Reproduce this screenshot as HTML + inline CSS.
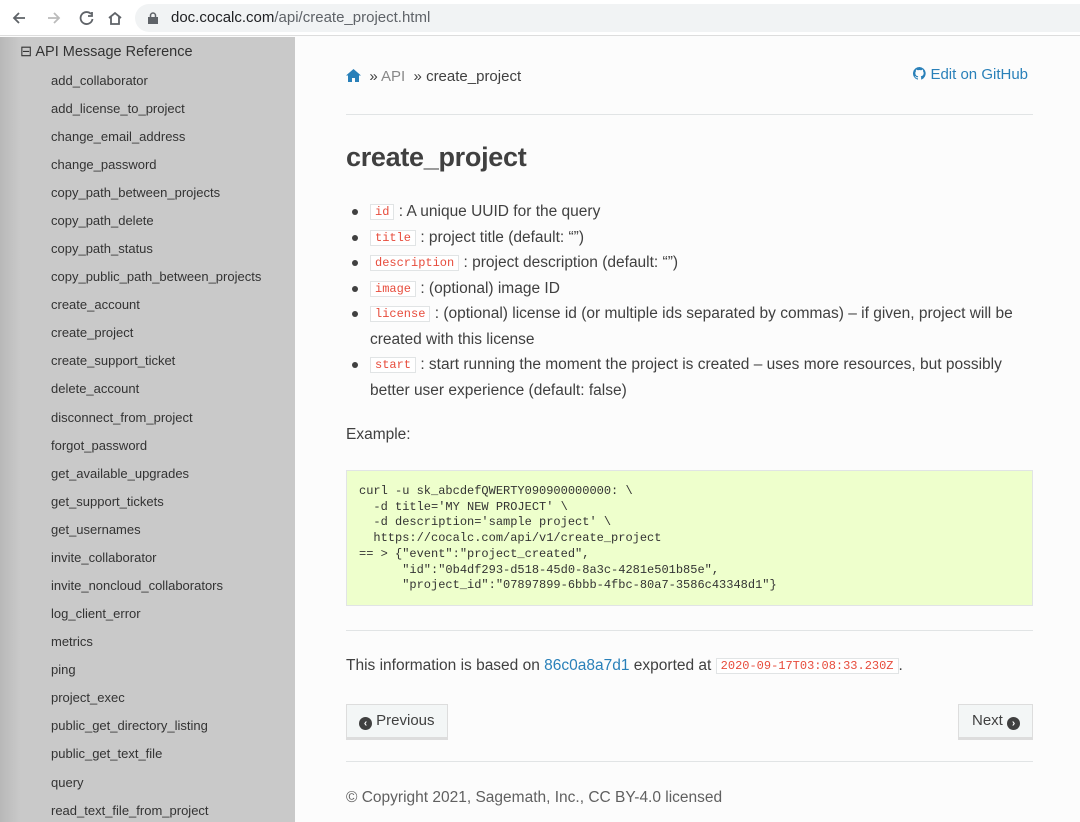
<!DOCTYPE html>
<html><head><meta charset="utf-8"><style>
*{margin:0;padding:0;box-sizing:border-box}
body{width:1080px;height:822px;overflow:hidden;background:#fcfcfc;font-family:"Liberation Sans",sans-serif;color:#404040;position:relative}
.top{position:absolute;left:0;top:0;width:1080px;height:36px;background:#fff;border-bottom:1px solid #ddd}
.url{position:absolute;left:135px;top:4px;width:960px;height:28px;border-radius:14px;background:#f1f3f4;font-size:15px;line-height:28px;padding-left:36px;color:#202124}
.url span{color:#5f6368}
.side{position:absolute;left:0;top:37px;width:295px;height:785px;background:linear-gradient(90deg,#b8b8b8 0,#c9c9c9 20px,#c9c9c9 100%)}
.side .h{position:absolute;left:20px;top:7px;font-size:14.5px;color:#333}
.side a{position:absolute;left:51px;font-size:13px;color:#333;text-decoration:none}
.main{position:absolute;left:346px;top:37px;width:687px}
.bc{position:absolute;top:31px;font-size:15px}
.gh{position:absolute;right:5px;top:29px;color:#2980b9;font-size:15px}
hr{border:0;border-top:1px solid #e1e4e5;position:absolute;left:0;width:687px}
h1{position:absolute;top:105px;font-size:27px;font-weight:bold;color:#404040;letter-spacing:-0.3px}
ul{position:absolute;top:162px;left:4px;list-style:none;font-size:15.5px;line-height:25.5px;width:680px}
ul li{position:relative;padding-left:20px}
ul li:before{content:"";position:absolute;left:2px;top:10px;width:6px;height:6px;border-radius:3px;background:#404040}
code{font-family:"Liberation Mono",monospace;font-size:12px;line-height:12px;color:#e74c3c;background:#fff;border:1px solid #e1e4e5;padding:1px 4px;display:inline-block;vertical-align:1px}
pre{position:absolute;top:433px;width:687px;height:136px;background:#eeffcc;border:1px solid #e1e4e5;font-family:"Liberation Mono",monospace;font-size:12px;line-height:15.7px;padding:13px 12px;color:#333}
.btn{position:absolute;top:667px;height:34px;background:#f3f6f6;border:1px solid #ddd;box-shadow:0 2px 0 #ddd;font-size:15px;line-height:32px;padding:0 12px;color:#404040}
.ic{display:inline-block;width:13px;height:13px;border-radius:7px;background:#404040;vertical-align:-1px;color:#fff;font-size:10px;line-height:13px;text-align:center;font-weight:bold}
</style></head><body>
<div class="top">
<svg style="position:absolute;left:10px;top:9px" width="120" height="18" viewBox="0 0 120 18" fill="none" stroke-width="1.8"><path d="M15 9H4M9 4L4 9l5 5" stroke="#5f6368"/><path d="M38 9h11M44 4l5 5-5 5" stroke="#bbb"/><path d="M81 5a6 6 0 1 0 1.5 5M82 3v4h-4" stroke="#5f6368"/><path d="M99 9l6-5 6 5M101 8v7h8V8" stroke="#5f6368"/></svg>
<div class="url"><svg style="position:absolute;left:13px;top:8px" width="10" height="12"><rect x="0" y="5" width="10" height="7" fill="#5f6368"/><path d="M2.5 5V3.5a2.5 2.5 0 0 1 5 0V5" stroke="#5f6368" fill="none" stroke-width="1.5"/></svg>doc.cocalc.com<span>/api/create_project.html</span></div>
</div>
<div class="side">
<div class="h">⊟ API Message Reference</div>
<a style="top:36px">add_collaborator</a><a style="top:64px">add_license_to_project</a><a style="top:92px">change_email_address</a><a style="top:120px">change_password</a><a style="top:148px">copy_path_between_projects</a><a style="top:176px">copy_path_delete</a><a style="top:204px">copy_path_status</a><a style="top:232px">copy_public_path_between_projects</a><a style="top:260px">create_account</a><a style="top:288px">create_project</a><a style="top:316px">create_support_ticket</a><a style="top:344px">delete_account</a><a style="top:373px">disconnect_from_project</a><a style="top:401px">forgot_password</a><a style="top:429px">get_available_upgrades</a><a style="top:457px">get_support_tickets</a><a style="top:485px">get_usernames</a><a style="top:513px">invite_collaborator</a><a style="top:541px">invite_noncloud_collaborators</a><a style="top:569px">log_client_error</a><a style="top:597px">metrics</a><a style="top:625px">ping</a><a style="top:653px">project_exec</a><a style="top:681px">public_get_directory_listing</a><a style="top:709px">public_get_text_file</a><a style="top:738px">query</a><a style="top:766px">read_text_file_from_project</a>
</div>
<div class="main">
<div class="bc"><svg width="15" height="13" viewBox="0 0 15 13" style="vertical-align:-1px"><path d="M7.5 0L0 6.5h2V13h4V9h3v4h4V6.5h2z" fill="#2980b9"/></svg> &nbsp;» <span style="color:#888">API</span> &nbsp;» create_project</div>
<div class="gh"><svg width="13" height="13" viewBox="0 0 16 16" style="vertical-align:-1px"><path fill="#2980b9" d="M8 0a8 8 0 0 0-2.5 15.6c.4 0 .5-.2.5-.4v-1.5c-2.2.5-2.7-1-2.7-1-.4-.9-.9-1.2-.9-1.2-.7-.5.1-.5.1-.5.8.1 1.200.8 1.2.8.7 1.3 1.9.9 2.3.7.1-.5.3-.9.5-1.1-1.8-.2-3.6-.9-3.6-4 0-.9.3-1.6.8-2.1-.1-.2-.4-1 .1-2.1 0 0 .7-.2 2.2.8a7.5 7.5 0 0 1 4 0c1.5-1 2.2-.8 2.2-.8.4 1.1.2 1.9.1 2.1.5.6.8 1.3.8 2.1 0 3.1-1.9 3.7-3.6 3.9.3.3.5.8.5 1.5v2.2c0 .2.1.5.6.4A8 8 0 0 0 8 0z"/></svg> Edit on GitHub</div>
<hr style="top:77px">
<h1>create_project</h1>
<ul>
<li><code>id</code> : A unique UUID for the query</li>
<li><code>title</code> : project title (default: “”)</li>
<li><code>description</code> : project description (default: “”)</li>
<li><code>image</code> : (optional) image ID</li>
<li><code>license</code> : (optional) license id (or multiple ids separated by commas) – if given, project will be created with this license</li>
<li><code>start</code> : start running the moment the project is created – uses more resources, but possibly better user experience (default: false)</li>
</ul>
<div style="position:absolute;top:389px;font-size:15.5px">Example:</div>
<pre>curl -u sk_abcdefQWERTY090900000000: \
  -d title='MY NEW PROJECT' \
  -d description='sample project' \
  https://cocalc.com/api/v1/create_project
== > {"event":"project_created",
      "id":"0b4df293-d518-45d0-8a3c-4281e501b85e",
      "project_id":"07897899-6bbb-4fbc-80a7-3586c43348d1"}</pre>
<hr style="top:593px">
<div style="position:absolute;top:620px;font-size:15.5px;white-space:nowrap">This information is based on <span style="color:#2980b9">86c0a8a7d1</span> exported at <code>2020-09-17T03:08:33.230Z</code>.</div>
<div class="btn" style="left:0"><span class="ic">‹</span> Previous</div>
<div class="btn" style="right:0;padding:0 12px 0 13px">Next <span class="ic">›</span></div>
<hr style="top:724px">
<div style="position:absolute;top:752px;font-size:15.5px;color:#606060">© Copyright 2021, Sagemath, Inc., CC BY-4.0 licensed</div>
</div>
</body></html>
